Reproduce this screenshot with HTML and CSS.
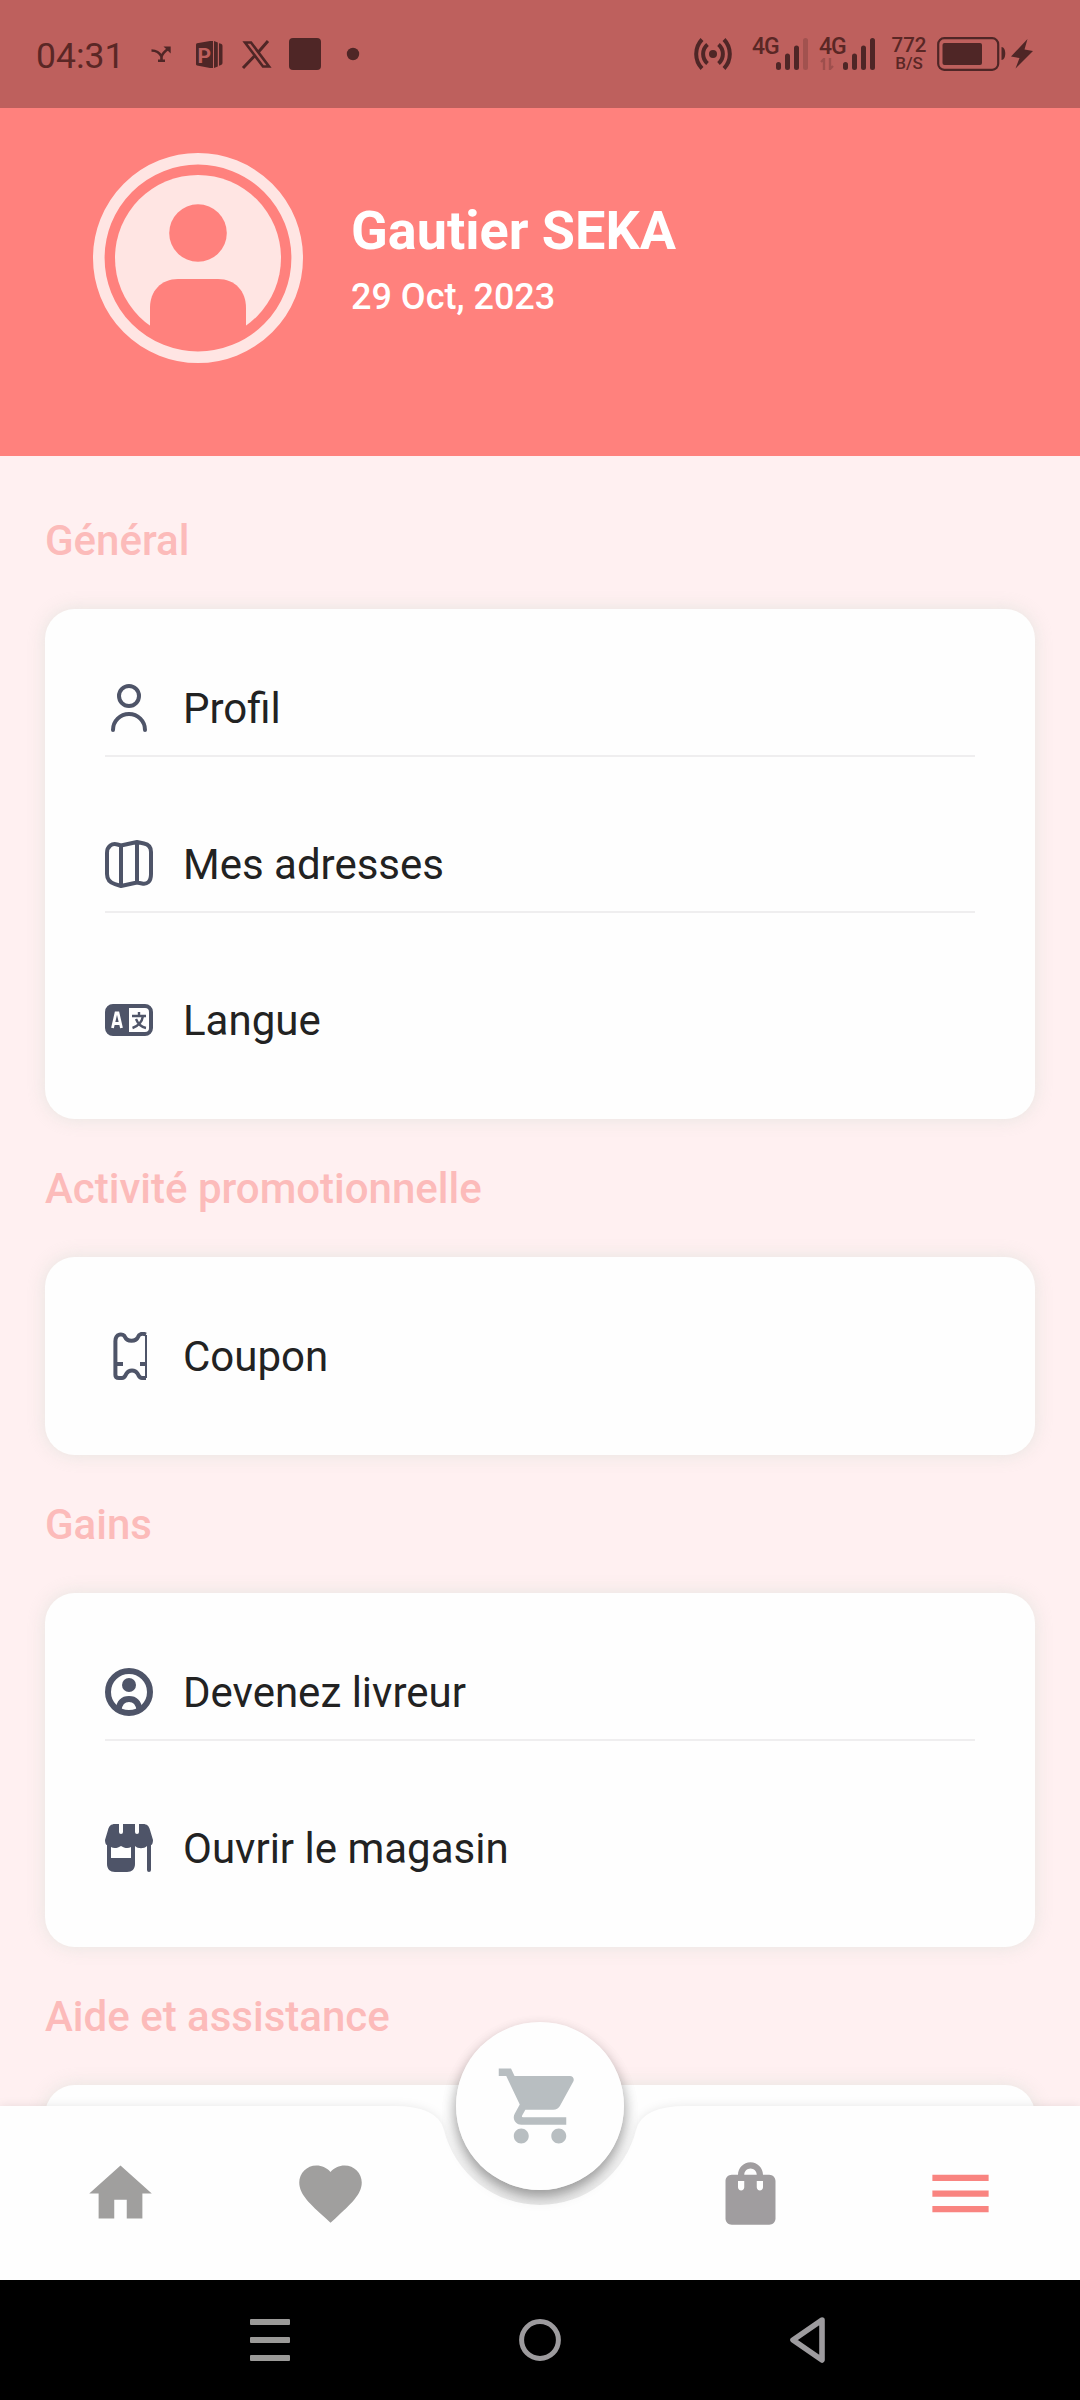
FILE: index.html
```html
<!DOCTYPE html>
<html lang="fr">
<head>
<meta charset="utf-8">
<title>Menu</title>
<link rel="stylesheet" href="styles.css">
</head>
<body>
<div class="screen">
  <header class="status">
    <span class="clock">04:31</span>
    <svg class="notifs" width="220" height="40" viewBox="0 0 220 40">
      <path d="M1.500 16.500c5 0 8 2 10 6V26M8 26.700h7M11.500 22.500c1-3 3-5 6.500-7.500" fill="none" stroke="#4f2626" stroke-width="2.600"/>
      <path d="M13.500 12.500h7.200v7z" fill="#4f2626"/>
      <path d="M46 10.500q0-1 1-1.300L60 7h3v27h-3l-13-2.500q-1-.3-1-1.300z" fill="#4f2626"/>
      <text class="badge-letter" x="47.500" y="28.500">P</text>
      <path d="M64 7l3.800 1.600v24L64 34zM69 9.200l2 .6q1.500.6 1.500 2V29q0 1.400-1.500 2l-2 .7z" fill="#4f2626"/>
      <path d="M95 8.500h6l18 24h-6z" fill="none" stroke="#4f2626" stroke-width="2.600"/>
      <path d="M118 7L108 18.500M104.500 22L93 34" fill="none" stroke="#4f2626" stroke-width="3"/>
      <rect x="139" y="4" width="32" height="32" rx="4" fill="#4f2626"/>
      <circle cx="203" cy="20" r="6.200" fill="#4f2626"/>
    </svg>
    <div class="status-right">
      <svg class="hotspot" width="42" height="34" viewBox="0 0 42 34" fill="none" stroke="#4f2626" stroke-width="4">
        <path d="M10 2.500a21 21 0 0 0 0 29M32 2.500a21 21 0 0 1 0 29M15.500 7.500a12.500 12.500 0 0 0 0 19M26.500 7.500a12.500 12.500 0 0 1 0 19"/>
        <circle cx="21" cy="17" r="4" fill="#4f2626" stroke="none"/>
      </svg>
      <div class="signal">
        <span>4G</span>
        <svg width="34" height="34" viewBox="0 0 34 34" fill="none" stroke="#4f2626" stroke-width="5" stroke-linecap="round">
          <path d="M3.500 27.500v3M12.500 19v11.500M21.500 11v19.500"/><path d="M30.500 3.500v27" opacity=".25"/>
        </svg>
      </div>
      <div class="signal signal-two">
        <div class="net"><span>4G</span>
        <svg width="14" height="12" viewBox="0 0 14 12" fill="none" stroke="#4f2626" stroke-width="2.400" opacity=".28"><path d="M1 4l3-3v11M13 8l-3 3V0"/></svg></div>
        <svg width="34" height="34" viewBox="0 0 34 34" fill="none" stroke="#4f2626" stroke-width="5" stroke-linecap="round">
          <path d="M3.500 27.500v3M12.500 19v11.500M21.500 11v19.500M30.500 3.500v27"/>
        </svg>
      </div>
      <div class="speed"><b>772</b><span>B/S</span></div>
      <svg width="98" height="36" viewBox="0 0 98 36">
        <rect x="1.200" y="2.200" width="60" height="31.600" rx="6" fill="none" stroke="#4f2626" stroke-width="2.200"/>
        <rect x="5.500" y="7" width="39.500" height="22" rx="2" fill="#4f2626"/>
        <path d="M64.500 11c5 0 5 13 0 13z" fill="#4f2626"/>
        <path d="M90.500 3L74 20.500l8.500 1.500-4 10.500L96 15l-8.500-1.500z" fill="#4f2626"/>
      </svg>
    </div>
  </header>

  <section class="profile">
    <svg class="avatar" width="210" height="210" viewBox="0 0 210 210">
      <circle cx="105" cy="105" r="83" fill="#ffe5e3"/>
      <circle cx="105" cy="80" r="28.800" fill="#ff817d"/>
      <path d="M57 190v-35c0-17 11-29 28-29h40c17 0 28 12 28 29v35z" fill="#ff817d"/>
      <circle cx="105" cy="105" r="99.200" fill="none" stroke="#ffe5e3" stroke-width="11.600"/>
    </svg>
    <div class="who">
      <h1>Gautier SEKA</h1>
      <p>29 Oct, 2023</p>
    </div>
  </section>

  <main class="content">
    <h2>Général</h2>
    <div class="card">
      <div class="row">
        <svg class="ico" viewBox="0 0 48 48" fill="none" stroke="#4e5468" stroke-width="4" stroke-linecap="round"><circle cx="24" cy="12" r="10"/><path d="M8 46a16 16 0 0 1 32 0"/></svg>
        <span>Profil</span>
      </div>
      <div class="row">
        <svg class="ico" viewBox="0 0 48 48" fill="none" stroke="#4e5468" stroke-width="4" stroke-linejoin="round"><path d="M2 13c0-7 5-10 10.500-8.500L16 5.500 32 2l7 1.500c5 1 7 4 7 8.500v22c0 8-4 10.500-9 9.500L32 42.500 16 46l-6-1.800C4.500 42.500 2 39 2 34zM16 5.500V46M32 2v40.500"/></svg>
        <span>Mes adresses</span>
      </div>
      <div class="row">
        <svg class="ico" viewBox="0 0 48 48"><path fill="#4e5468" fill-rule="evenodd" d="M8 8h32a8 8 0 0 1 8 8v16a8 8 0 0 1-8 8H8a8 8 0 0 1-8-8V16a8 8 0 0 1 8-8zm16 4v24h16a4 4 0 0 0 4-4V16a4 4 0 0 0-4-4z"/><path d="M7.500 32L11 17h2l3.500 15M8.500 27.500h7" fill="none" stroke="#fff" stroke-width="2.800"/><path d="M34 16v3M27 20h14M38 20c-1 6-5 10-10.500 12M31 23c2 5 5 8 10 9" fill="none" stroke="#4e5468" stroke-width="2.400"/></svg>
        <span>Langue</span>
      </div>
    </div>

    <h2>Activité promotionnelle</h2>
    <div class="card">
      <div class="row">
        <svg class="ico" viewBox="0 0 48 48" fill="none" stroke="#4e5468" stroke-width="4"><path d="M41 2.500C37 1 34 2 33 5c-2 5-11 5-13 0-1.500-4-10-4-9.600 5v33c0 2.500 1.500 3 3.600 3h3c3 0 3-2 4.500-4.500 2.500-4 8.500-4 11 0C34 44 34 46 37 46h4M10 32h8M42 32h-7"/><path d="M41 3v43" stroke-width="2"/></svg>
        <span>Coupon</span>
      </div>
    </div>

    <h2>Gains</h2>
    <div class="card">
      <div class="row">
        <svg class="ico" viewBox="0 0 48 48"><circle cx="24" cy="24" r="21" fill="none" stroke="#4e5468" stroke-width="6"/><circle cx="24" cy="17" r="7" fill="#4e5468"/><path d="M13.500 42c1-8 5-11 10.500-11S33.500 34 34.500 42" fill="none" stroke="#4e5468" stroke-width="6"/></svg>
        <span>Devenez livreur</span>
      </div>
      <div class="row">
        <svg class="ico" viewBox="0 0 48 48" fill="#4e5468"><path d="M10 0h4v8a2 2 0 0 0 4 0V0h12v8a2 2 0 0 0 4 0V0h4c4 0 6 2 7 6l3 10c0 3-1 5-2 5v25a2 2 0 0 1-4 0V22c-3 3-9 3-12 0v18c0 5-3 8-8 8H10c-5 0-8-3-8-8V21c-1 0-2-2-2-5L3 6c1-4 3-6 7-6z"/><path d="M6 23c3 2 7 1 10-1 3 2 7 3 10 1v11H6z" fill="#fff"/></svg>
        <span>Ouvrir le magasin</span>
      </div>
    </div>

    <h2>Aide et assistance</h2>
    <div class="card"></div>
  </main>

  <nav class="tabs">
    <svg class="tabs-bg" width="1080" height="174" viewBox="0 0 1080 174"><path fill="#fefefe" d="M0 0H393Q438 0 443.900 23.800A99 99 0 0 0 636.100 23.800Q642 0 687 0H1080V174H0z"/></svg>
    <svg class="tab" viewBox="0 0 24 24" fill="#a09f9e"><path d="M10 20v-6h4v6h5v-8h3L12 3 2 12h3v8z"/></svg>
    <svg class="tab" viewBox="0 0 24 24" fill="#a09f9e"><path d="M12 21.350l-1.450-1.320C5.400 15.360 2 12.280 2 8.500 2 5.420 4.420 3 7.500 3c1.740 0 3.410.81 4.500 2.090C13.090 3.810 14.760 3 16.500 3 19.580 3 22 5.420 22 8.500c0 3.780-3.400 6.860-8.550 11.540z"/></svg>
    <button class="fab"><svg width="90" height="90" viewBox="0 0 24 24" fill="#b8bec1"><path d="M7 18c-1.100 0-1.990.9-1.990 2S5.900 22 7 22s2-.9 2-2-.9-2-2-2zM1 2v2h2l3.600 7.590-1.350 2.450c-.16.28-.25.61-.25.96 0 1.100.9 2 2 2h12v-2H7.420c-.14 0-.25-.11-.25-.25l.03-.12.9-1.630h7.450c.75 0 1.410-.41 1.750-1.030l3.580-6.490c.08-.14.12-.31.12-.48 0-.55-.45-1-1-1H5.210l-.94-2zm16 16c-1.100 0-1.990.9-1.990 2s.89 2 1.990 2 2-.9 2-2-.9-2-2-2z"/></svg></button>
    <svg class="tab" viewBox="0 0 24 24" fill="#a09d9f"><path d="M18 6h-2c0-2.210-1.790-4-4-4S8 3.790 8 6H6c-1.100 0-2 .9-2 2v12c0 1.100.9 2 2 2h12c1.100 0 2-.9 2-2V8c0-1.100-.9-2-2-2zm-8 4c0 .55-.45 1-1 1s-1-.45-1-1V8h2zm2-6c1.100 0 2 .9 2 2h-4c0-1.100.9-2 2-2zm4 6c0 .55-.45 1-1 1s-1-.45-1-1V8h2z"/></svg>
    <svg class="tab" viewBox="0 0 24 24" fill="#f98480"><path d="M3 18h18v-2H3zm0-5h18v-2H3zm0-7v2h18V6z"/></svg>
  </nav>

  <footer class="system">
    <svg width="42" height="50" viewBox="0 0 42 50" fill="#9b9a98"><rect x="1" y="4" width="40" height="6" rx="1"/><rect x="1" y="22" width="40" height="6" rx="1"/><rect x="1" y="40" width="40" height="6" rx="1"/></svg>
    <svg width="42" height="50" viewBox="0 0 42 50"><circle cx="21" cy="25" r="18.400" fill="none" stroke="#9d9b9e" stroke-width="5"/></svg>
    <svg width="42" height="50" viewBox="0 0 42 50"><path d="M33 5L4 25l29 20z" fill="none" stroke="#9d9b9e" stroke-width="5.600" stroke-linejoin="round"/></svg>
  </footer>
</div>
</body>
</html>
```
FILE: styles.css
```css
* { box-sizing: border-box; }
body { margin: 0; font-family: Roboto, "Liberation Sans", sans-serif; }
h1, h2, p { margin: 0; }

.screen {
  display: flex;
  flex-direction: column;
  width: 1080px;
  height: 2400px;
  overflow: hidden;
  background: #fff0f1;
}

.status {
  flex: none;
  display: flex;
  align-items: center;
  height: 108px;
  padding: 0 45px 0 36px;
  background: #be605d;
  color: #5a2725;
}
.clock { width: 114px; padding-top: 3px; font-size: 35.5px; line-height: 40px; }
.badge-letter { font-size: 21px; font-weight: 700; fill: #be605d; }
.status-right { display: flex; align-items: center; margin-left: auto; }
.signal { display: flex; align-items: flex-start; height: 34px; margin-left: 18px; font-size: 23px; font-weight: 500; line-height: 20px; }
.signal span { display: block; width: 23px; height: 18px; white-space: nowrap; letter-spacing: -1px; }
.signal-two { margin-left: 10px; }
.net { display: flex; flex-direction: column; gap: 3px; }
.net svg { margin-left: 1px; }
.speed { display: flex; flex-direction: column; align-items: center; width: 34px; margin: 0 11px 0 16px; font-size: 20.5px; line-height: 18px; font-weight: 500; }
.speed b { font-weight: 500; }
.speed span { font-size: 17px; line-height: 18px; }

.profile {
  flex: none;
  display: flex;
  align-items: flex-start;
  gap: 48px;
  height: 348px;
  padding: 45px 93px;
  background: #ff817d;
  color: #fff;
}
.who { padding-top: 45px; }
.who h1 { font-size: 54px; line-height: 66px; font-weight: 700; white-space: nowrap; }
.who p { margin-top: 11px; font-size: 36px; line-height: 44px; font-weight: 500; }

.content { flex: 1; min-height: 0; padding: 15px 45px 0; overflow: hidden; }
.content h2 {
  height: 138px;
  padding-top: 45px;
  font-size: 42px;
  line-height: 50px;
  font-weight: 500;
  color: #fcbbba;
  white-space: nowrap;
}
.card {
  min-height: 198px;
  padding: 75px 60px;
  border-radius: 30px;
  background: #fefefe;
  box-shadow: 0 0 18px rgba(200, 215, 205, .45);
}
.row {
  display: flex;
  align-items: flex-start;
  gap: 30px;
  height: 73px;
  margin-bottom: 83px;
  border-bottom: 2px solid #efeeef;
  font-size: 42px;
  line-height: 50px;
  color: #222;
}
.row:last-child { height: 48px; margin: 0; border: 0; }
.ico { flex: none; width: 48px; height: 48px; }

.tabs {
  position: relative;
  flex: none;
  display: grid;
  grid-template-columns: repeat(5, 210px);
  grid-template-rows: 174px;
  align-items: center;
  justify-content: center;
  justify-items: center;
  height: 174px;
  margin-top: -174px;
}
/* Raised button's shadow, cast behind the bar and visible through its notch */
.tabs::before {
  content: "";
  position: absolute;
  left: 456px;
  top: -84px;
  width: 168px;
  height: 168px;
  border-radius: 50%;
  box-shadow: 0 8px 14px rgba(0, 0, 0, .3);
}
.tabs-bg { position: absolute; left: 0; top: 0; overflow: visible; filter: drop-shadow(0 0 5px rgba(0, 0, 0, .09)); }
.tab { position: relative; width: 75px; height: 75px; }
.fab {
  position: relative;
  align-self: start;
  display: flex;
  align-items: center;
  justify-content: center;
  width: 168px;
  height: 168px;
  margin-top: -84px;
  padding: 0;
  border: 0;
  border-radius: 50%;
  background: #fefefe;
  box-shadow: 0 7px 16px rgba(0, 0, 0, .14);
}

.system {
  flex: none;
  display: flex;
  align-items: center;
  justify-content: center;
  gap: 228px;
  height: 120px;
  background: #000;
}
```
